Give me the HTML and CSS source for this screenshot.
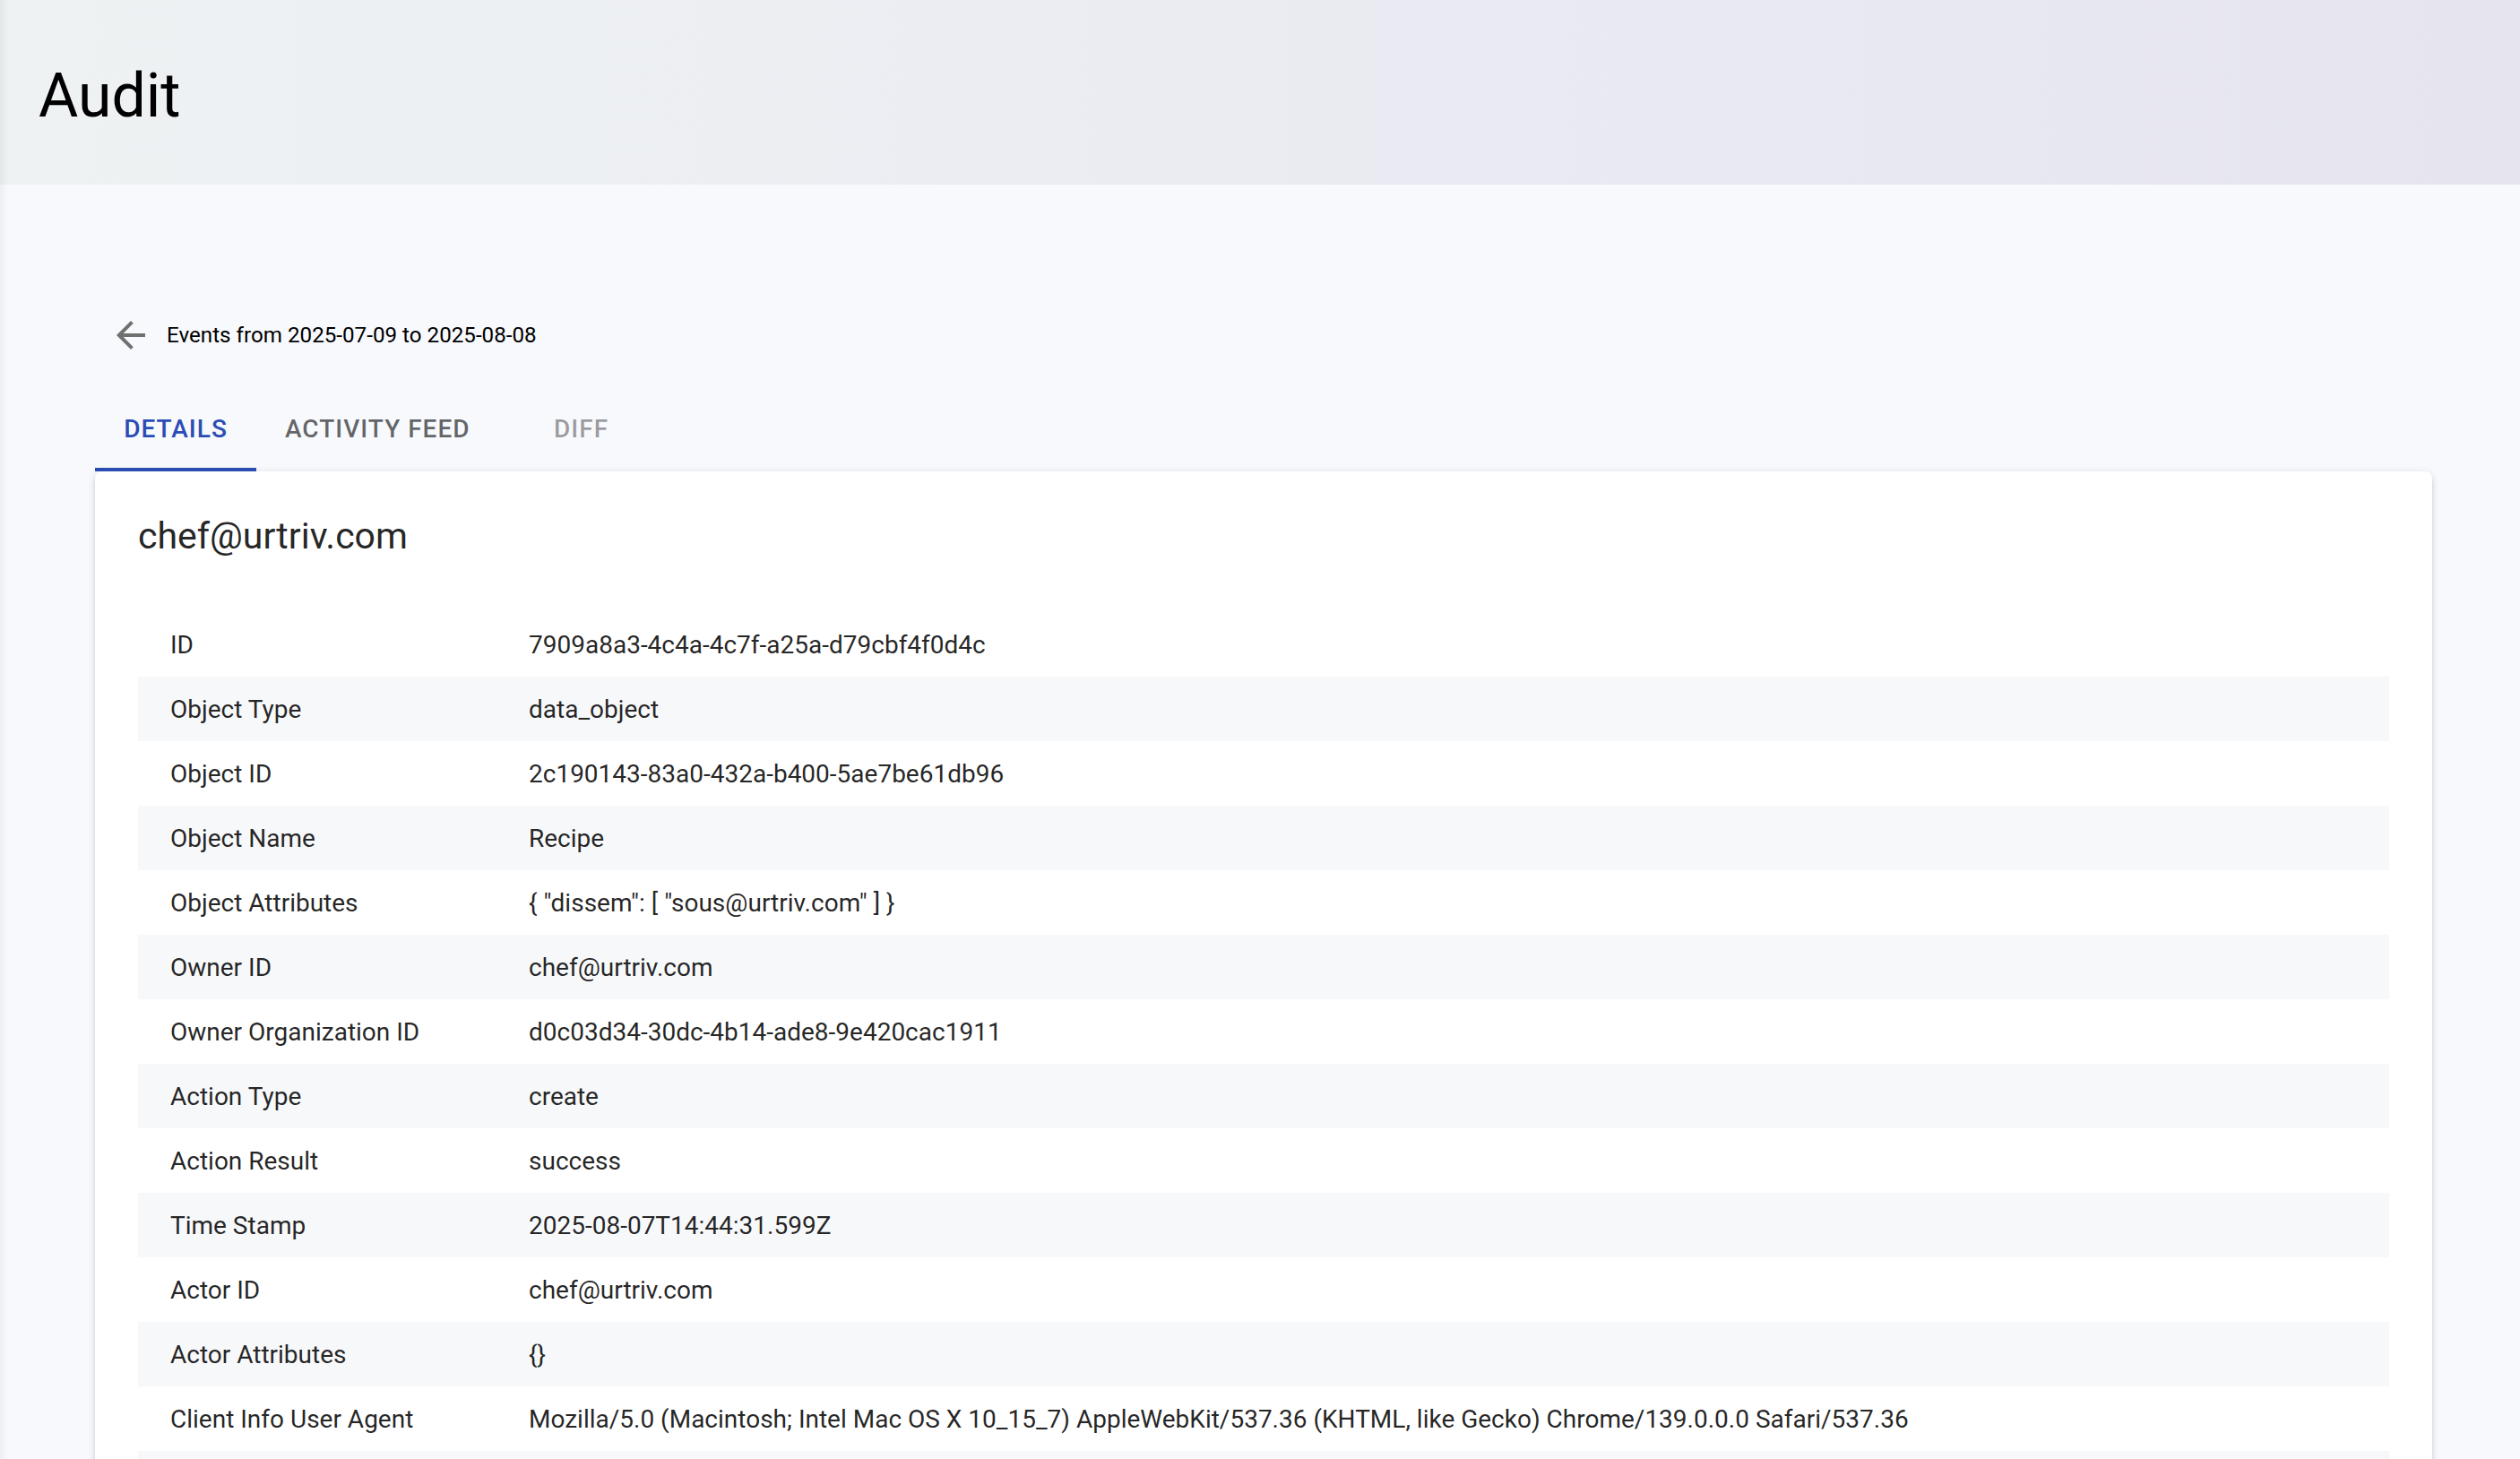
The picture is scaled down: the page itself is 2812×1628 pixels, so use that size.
FILE: index.html
```html
<!DOCTYPE html>
<html lang="en">
<head>
    <meta charset="UTF-8">
    <meta name="viewport" content="width=device-width, initial-scale=1.0">
    <title>Audit</title>
    <link rel="stylesheet" href="styles.css">
</head>
<body>
    <header class="topbar">
        <h1>Audit</h1>
    </header>

    <main class="content">
        <div class="back-row">
            <span class="back-icon">
                <svg viewBox="0 0 24 24" width="48" height="48">
                    <path d="M20 11H7.83l5.59-5.59L12 4l-8 8 8 8 1.41-1.41L7.83 13H20v-2z"></path>
                </svg>
            </span>
            <span class="range">Events from 2025-07-09 to 2025-08-08</span>
        </div>

        <nav class="tabs">
            <div class="tab active">Details</div>
            <div class="tab">Activity Feed</div>
            <div class="tab disabled">Diff</div>
        </nav>

        <section class="card">
            <h2 class="card-title">chef@urtriv.com</h2>
            <table class="details">
                <tbody>
                    <tr><td>ID</td><td>7909a8a3-4c4a-4c7f-a25a-d79cbf4f0d4c</td></tr>
                    <tr><td>Object Type</td><td>data_object</td></tr>
                    <tr><td>Object ID</td><td>2c190143-83a0-432a-b400-5ae7be61db96</td></tr>
                    <tr><td>Object Name</td><td>Recipe</td></tr>
                    <tr><td>Object Attributes</td><td>{ "dissem": [ "sous@urtriv.com" ] }</td></tr>
                    <tr><td>Owner ID</td><td>chef@urtriv.com</td></tr>
                    <tr><td>Owner Organization ID</td><td>d0c03d34-30dc-4b14-ade8-9e420cac1911</td></tr>
                    <tr><td>Action Type</td><td>create</td></tr>
                    <tr><td>Action Result</td><td>success</td></tr>
                    <tr><td>Time Stamp</td><td>2025-08-07T14:44:31.599Z</td></tr>
                    <tr><td>Actor ID</td><td>chef@urtriv.com</td></tr>
                    <tr><td>Actor Attributes</td><td>{}</td></tr>
                    <tr><td>Client Info User Agent</td><td>Mozilla/5.0 (Macintosh; Intel Mac OS X 10_15_7) AppleWebKit/537.36 (KHTML, like Gecko) Chrome/139.0.0.0 Safari/537.36</td></tr>
                    <tr><td></td><td></td></tr>
                </tbody>
            </table>
        </section>
    </main>
</body>
</html>
```

FILE: styles.css
```css
* {
    margin: 0;
    padding: 0;
    box-sizing: border-box;
}

body {
    font-family: Roboto, "Liberation Sans", sans-serif;
    background: #f8f9fd;
    color: rgba(0, 0, 0, 0.87);
    min-height: 100vh;
}

.topbar {
    height: 206px;
    padding: 67px 0 0 43px;
    background: linear-gradient(90deg, #eef2f3 0%, #eaebf2 55%, #e6e5ef 100%);
    box-shadow: inset 12px 0 12px -10px rgba(0, 0, 0, 0.07);
}

h1 {
    font-size: 68px;
    font-weight: 400;
    line-height: 80px;
    color: #000;
}

.content {
    padding: 144px 98px 0 106px;
    box-shadow: inset 12px 0 12px -10px rgba(0, 0, 0, 0.06);
    min-height: calc(100vh - 206px);
}

.back-row {
    display: flex;
    align-items: center;
    height: 48px;
    padding-left: 16px;
}

.back-icon {
    display: flex;
    width: 48px;
    height: 48px;
    fill: #707070;
}

.range {
    margin-left: 16px;
    font-size: 24.2px;
    color: #000;
}

.tabs {
    display: flex;
    margin-top: 32px;
}

.tab {
    min-width: 180px;
    min-height: 96px;
    padding: 24px 32px;
    display: flex;
    align-items: center;
    justify-content: center;
    font-size: 28px;
    font-weight: 500;
    letter-spacing: 1px;
    text-transform: uppercase;
    color: rgba(0, 0, 0, 0.6);
}

.tab.active {
    color: #2a4db3;
    box-shadow: inset 0 -4px 0 #2a4db3;
}

.tab.disabled {
    color: rgba(0, 0, 0, 0.38);
    padding-left: 36px;
}

.card {
    background: #fff;
    border-radius: 8px;
    padding: 48px 48px 48px;
    box-shadow: 0 4px 4px rgba(0, 0, 0, 0.1), 0 6px 2px -4px rgba(0, 0, 0, 0.08), 0 2px 10px rgba(0, 0, 0, 0.12);
}

.card-title {
    font-size: 41px;
    font-weight: 400;
    line-height: 48px;
    color: rgba(0, 0, 0, 0.87);
    margin-bottom: 61px;
}

.details {
    width: 100%;
    border-collapse: collapse;
    font-size: 28px;
}

.details tr {
    height: 72px;
}

.details tr:nth-child(even) {
    background: #f7f8fa;
}

.details td {
    padding: 0 32px 0 36px;
    vertical-align: middle;
}

.details td:first-child {
    width: 404px;
}

.details td:last-child {
    padding-left: 32px;
}
```
